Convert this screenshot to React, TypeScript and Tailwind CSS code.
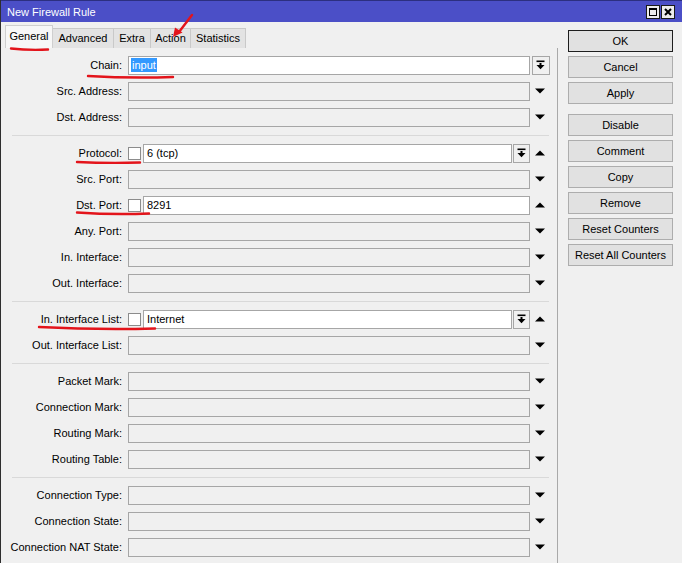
import React from 'react';

type Row = {
  label: string;
  value?: string;
  check?: boolean;
  combo?: boolean; // drop button inside the field area
  drop?: boolean; // drop button in the arrow column (Chain)
  arrow?: 'up' | 'down' | 'none';
  active?: boolean;
  selected?: boolean;
};

const sections: Row[][] = [
  [
    { label: 'Chain', value: 'input', drop: true, arrow: 'none', active: true, selected: true },
    { label: 'Src. Address' },
    { label: 'Dst. Address' },
  ],
  [
    { label: 'Protocol', check: true, value: '6 (tcp)', combo: true, arrow: 'up', active: true },
    { label: 'Src. Port' },
    { label: 'Dst. Port', check: true, value: '8291', arrow: 'up', active: true },
    { label: 'Any. Port' },
    { label: 'In. Interface' },
    { label: 'Out. Interface' },
  ],
  [
    { label: 'In. Interface List', check: true, value: 'Internet', combo: true, arrow: 'up', active: true },
    { label: 'Out. Interface List' },
  ],
  [
    { label: 'Packet Mark' },
    { label: 'Connection Mark' },
    { label: 'Routing Mark' },
    { label: 'Routing Table' },
  ],
  [
    { label: 'Connection Type' },
    { label: 'Connection State' },
    { label: 'Connection NAT State' },
  ],
];

const tabs = ['General', 'Advanced', 'Extra', 'Action', 'Statistics'];
const tabWidths = ['w-[48px]', 'w-[61px]', 'w-[37px]', 'w-[40px]', 'w-[55px]'];

const buttons = [
  ['OK', 'Cancel', 'Apply'],
  ['Disable', 'Comment', 'Copy', 'Remove', 'Reset Counters', 'Reset All Counters'],
];

function DropIcon() {
  return (
    <svg width="9" height="10" viewBox="0 0 9 10">
      <rect x="0.5" y="0.5" width="8" height="1.6" fill="#000" />
      <rect x="3.5" y="3" width="2" height="2" fill="#000" />
      <polygon points="0.5,5 8.5,5 4.5,9.2" fill="#000" />
    </svg>
  );
}

function Arrow({ dir }: { dir: 'up' | 'down' }) {
  return (
    <svg width="10" height="6" viewBox="0 0 10 6">
      {dir === 'down' ? (
        <polygon points="0,0.5 10,0.5 5,5.5" fill="#000" />
      ) : (
        <polygon points="0,5.5 10,5.5 5,0.5" fill="#000" />
      )}
    </svg>
  );
}

function FieldRow({ row }: { row: Row }) {
  const arrow = row.arrow ?? 'down';
  return (
    <div className="flex items-center h-[26px]">
      <div className="w-[121px] text-right whitespace-nowrap">{row.label}:</div>
      <div className="w-[6px]" />
      <div className="w-[402px] flex items-center">
        {row.check && (
          <div className="w-[13px] h-[13px] bg-white border border-[#8c8c8c] mr-[2px] shrink-0" />
        )}
        <div
          className={`flex-1 h-[19px] border border-[#a6a6a6] flex items-center pl-[2px] ${
            row.active ? 'bg-white' : 'bg-[#f0f0f0]'
          }`}
        >
          {row.value &&
            (row.selected ? (
              <span className="bg-[#3399ff] text-white px-px leading-[14px]">{row.value}</span>
            ) : (
              <span className="pl-px">{row.value}</span>
            ))}
        </div>
        {row.combo && (
          <div className="w-[17px] h-[19px] ml-px border border-[#a6a6a6] bg-[#f0f0f0] flex items-center justify-center shrink-0">
            <DropIcon />
          </div>
        )}
      </div>
      <div className="w-[20px] flex items-center justify-center">
        {row.drop && (
          <div className="w-[18px] h-[19px] ml-px border border-[#a6a6a6] bg-[#f0f0f0] flex items-center justify-center">
            <DropIcon />
          </div>
        )}
        {arrow !== 'none' && !row.drop && <Arrow dir={arrow} />}
      </div>
    </div>
  );
}

function Annotations() {
  return (
    <svg
      className="absolute left-0 top-0 pointer-events-none"
      width="682"
      height="563"
      viewBox="0 0 682 563"
    >
      <g stroke="#e3141b" strokeWidth="2.4" fill="none" strokeLinecap="round">
        <path d="M10 48.5 Q28 50.5 47 49.5" />
        <path d="M87 76 Q130 78.5 172 77" />
        <path d="M76 162 Q108 163.5 139 162.5" />
        <path d="M76 212.5 Q112 215 148 213.5" />
        <path d="M38 327 Q96 330 154 328.5" />
        <path d="M191 15 L178 32" />
      </g>
      <polygon points="172,37 174,27.5 181.5,32.5" fill="#e3141b" />
    </svg>
  );
}

export default function App() {
  return (
    <div className="relative w-[682px] h-[563px] overflow-hidden bg-[#f0f0f0] text-[11px] text-black font-['Liberation_Sans',Arial,sans-serif] border-l border-[#2e2e2e]">
      {/* Title bar */}
      <div className="h-[22px] bg-[#4b4fc7] flex items-center justify-between pl-[6px] pr-[7px] border-t border-[#2c2f80]">
        <span className="text-white text-[11px] pt-px">New Firewall Rule</span>
        <div className="flex items-center gap-px">
          <div className="w-[14px] h-[14px] bg-[#ececec] border border-[#1a1a1a] flex items-center justify-center">
            <div className="w-[8px] h-[8px] border border-black border-t-2" />
          </div>
          <div className="w-[14px] h-[14px] bg-[#ececec] border border-[#1a1a1a] flex items-center justify-center">
            <svg width="8" height="8" viewBox="0 0 8 8">
              <path d="M1 1 L7 7 M7 1 L1 7" stroke="#000" strokeWidth="2" />
            </svg>
          </div>
        </div>
      </div>

      <div className="flex">
        {/* Left: tabs + form */}
        <div className="w-[557px] shrink-0">
          <div className="h-[26px] flex items-end pl-[4px]">
            {tabs.map((t, i) =>
              i === 0 ? (
                <div
                  key={t}
                  className={`${tabWidths[i]} h-[23px] bg-[#f7f7f7] border border-b-0 border-[#cfcfcf] flex items-center justify-center pb-px`}
                >
                  {t}
                </div>
              ) : (
                <div
                  key={t}
                  className={`${tabWidths[i]} h-[20px] bg-[#e3e3e3] border border-b-0 border-l-0 border-[#c9c9c9] flex items-center justify-center`}
                >
                  {t}
                </div>
              )
            )}
          </div>
          <div className="border-r border-[#a9a9a9] h-[515px] pt-[4px]">
            {sections.map((sec, si) => (
              <div key={si}>
                {si > 0 && (
                  <div className="h-[10px] flex items-center pl-[11px] pr-[8px]">
                    <div className="w-full border-t border-[#d9d9d9]" />
                  </div>
                )}
                {sec.map((r) => (
                  <FieldRow key={r.label} row={r} />
                ))}
              </div>
            ))}
          </div>
        </div>

        {/* Right: buttons */}
        <div className="pl-[10px] pt-[8px] flex flex-col">
          {buttons.map((grp, gi) => (
            <div key={gi} className={`flex flex-col gap-[4px] ${gi > 0 ? 'mt-[10px]' : ''}`}>
              {grp.map((b) => (
                <div
                  key={b}
                  className={`w-[105px] h-[22px] flex items-center justify-center bg-[#e1e1e1] border whitespace-nowrap ${
                    b === 'OK' ? 'border-[#1e1e1e]' : 'border-[#adadad]'
                  }`}
                >
                  {b}
                </div>
              ))}
            </div>
          ))}
        </div>
      </div>

      <Annotations />
    </div>
  );
}
